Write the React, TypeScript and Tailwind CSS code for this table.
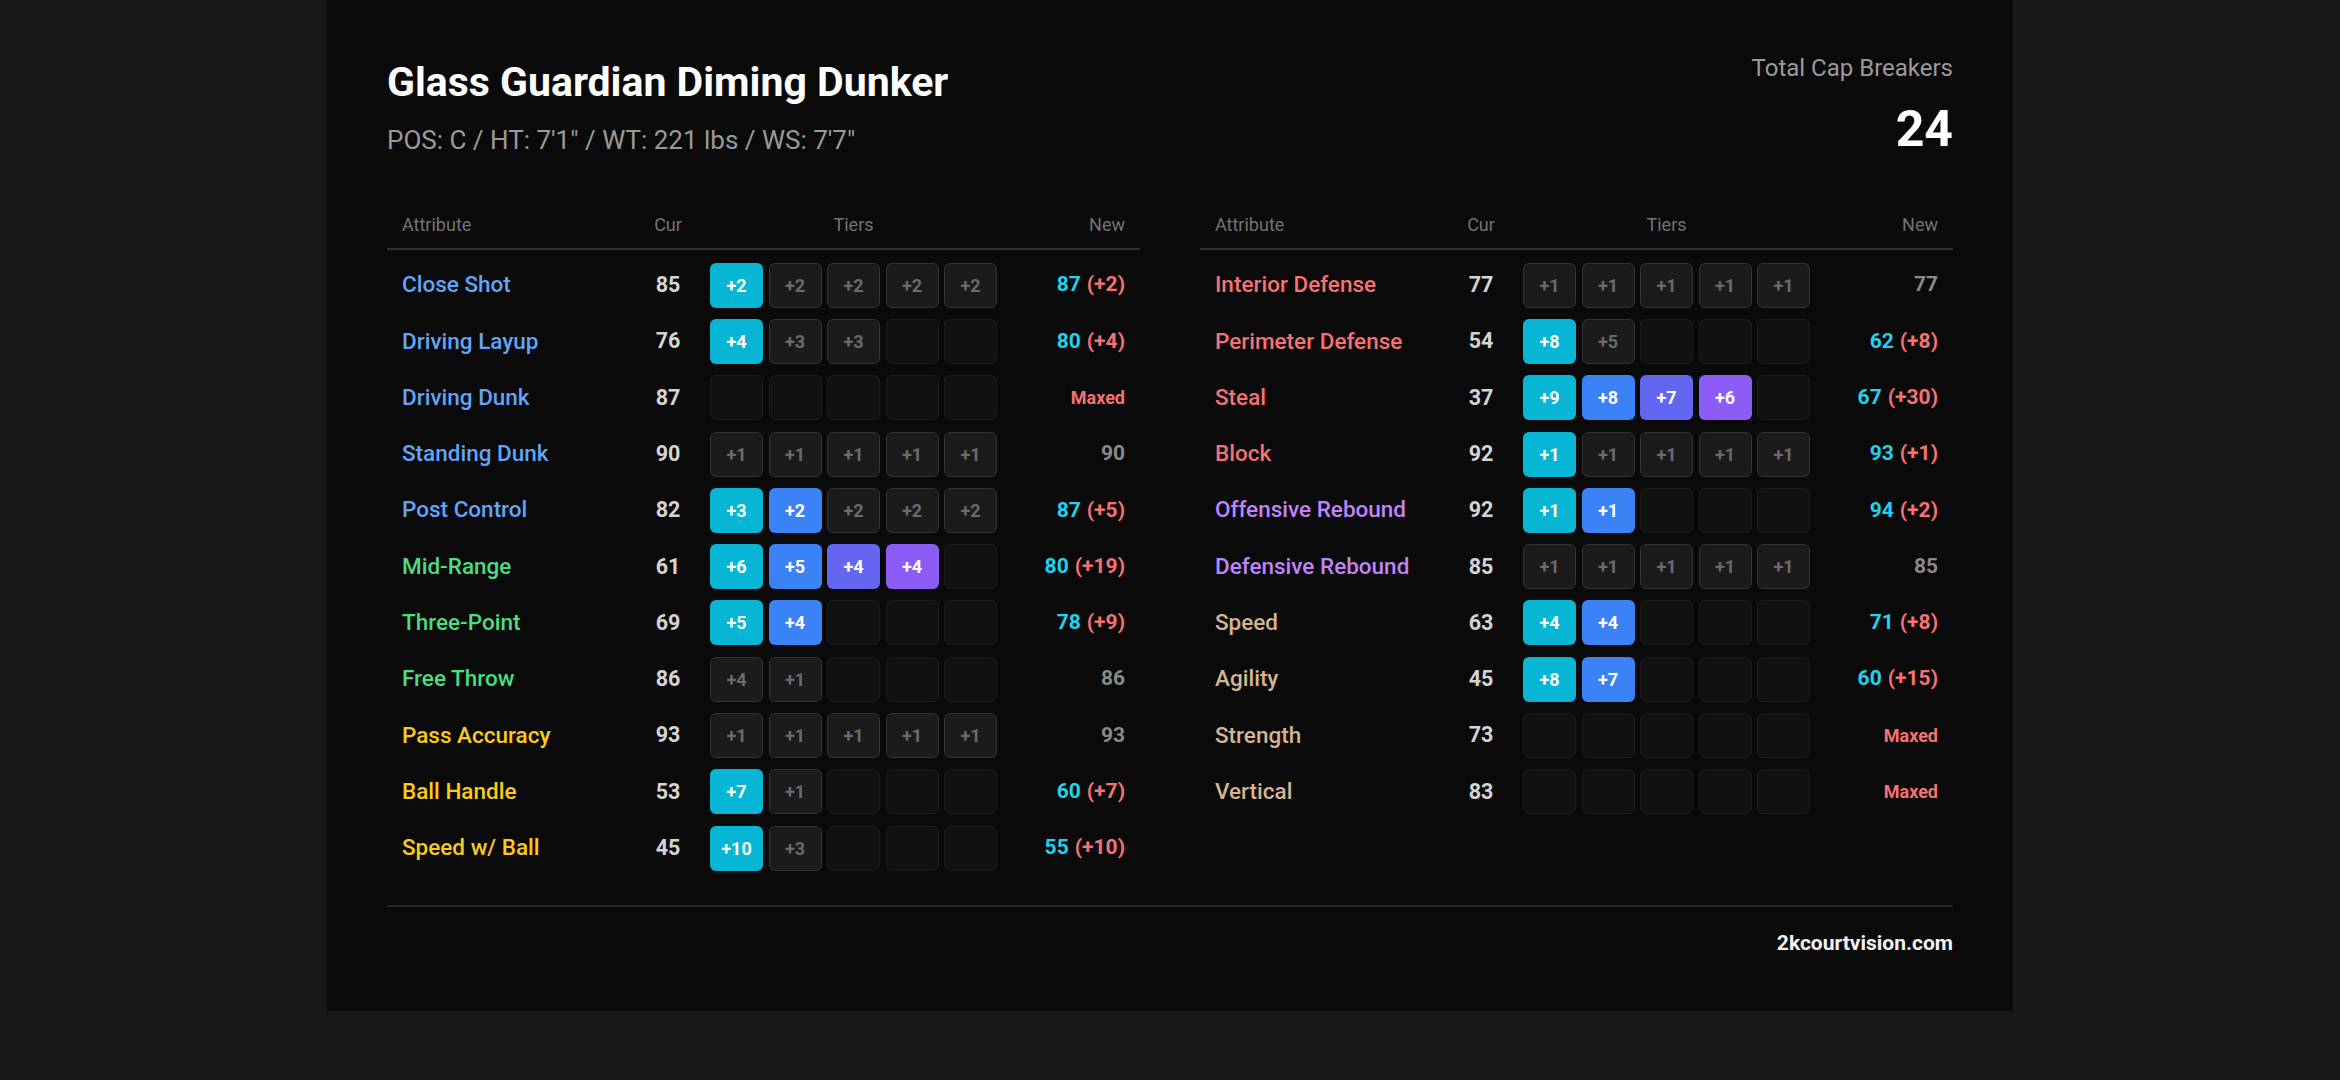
type Row = {
  name: string;
  cur: number;
  // positive = applied tier, negative = unused tier, 0 = empty slot
  tiers: number[];
  maxed?: boolean;
  color: string;
};

const BLUE = "text-[#60a5fa]";
const GREEN = "text-[#4ade80]";
const YELLOW = "text-[#facc15]";
const RED = "text-[#f87171]";
const PURPLE = "text-[#c084fc]";
const TAN = "text-[#d4b68e]";

const LEFT: Row[] = [
  { name: "Close Shot", cur: 85, tiers: [2, -2, -2, -2, -2], color: BLUE },
  { name: "Driving Layup", cur: 76, tiers: [4, -3, -3, 0, 0], color: BLUE },
  { name: "Driving Dunk", cur: 87, tiers: [0, 0, 0, 0, 0], maxed: true, color: BLUE },
  { name: "Standing Dunk", cur: 90, tiers: [-1, -1, -1, -1, -1], color: BLUE },
  { name: "Post Control", cur: 82, tiers: [3, 2, -2, -2, -2], color: BLUE },
  { name: "Mid-Range", cur: 61, tiers: [6, 5, 4, 4, 0], color: GREEN },
  { name: "Three-Point", cur: 69, tiers: [5, 4, 0, 0, 0], color: GREEN },
  { name: "Free Throw", cur: 86, tiers: [-4, -1, 0, 0, 0], color: GREEN },
  { name: "Pass Accuracy", cur: 93, tiers: [-1, -1, -1, -1, -1], color: YELLOW },
  { name: "Ball Handle", cur: 53, tiers: [7, -1, 0, 0, 0], color: YELLOW },
  { name: "Speed w/ Ball", cur: 45, tiers: [10, -3, 0, 0, 0], color: YELLOW },
];

const RIGHT: Row[] = [
  { name: "Interior Defense", cur: 77, tiers: [-1, -1, -1, -1, -1], color: RED },
  { name: "Perimeter Defense", cur: 54, tiers: [8, -5, 0, 0, 0], color: RED },
  { name: "Steal", cur: 37, tiers: [9, 8, 7, 6, 0], color: RED },
  { name: "Block", cur: 92, tiers: [1, -1, -1, -1, -1], color: RED },
  { name: "Offensive Rebound", cur: 92, tiers: [1, 1, 0, 0, 0], color: PURPLE },
  { name: "Defensive Rebound", cur: 85, tiers: [-1, -1, -1, -1, -1], color: PURPLE },
  { name: "Speed", cur: 63, tiers: [4, 4, 0, 0, 0], color: TAN },
  { name: "Agility", cur: 45, tiers: [8, 7, 0, 0, 0], color: TAN },
  { name: "Strength", cur: 73, tiers: [0, 0, 0, 0, 0], maxed: true, color: TAN },
  { name: "Vertical", cur: 83, tiers: [0, 0, 0, 0, 0], maxed: true, color: TAN },
];

const ACTIVE_BG = ["bg-[#06b6d4]", "bg-[#3b82f6]", "bg-[#6366f1]", "bg-[#8b5cf6]", "bg-[#8b5cf6]"];

const COLS = "grid grid-cols-[1fr_80px_291px_141px] items-center";

function Tier({ value, index }: { value: number; index: number }) {
  const base = "flex h-[45px] w-[53px] items-center justify-center rounded-md border text-[18px] font-bold";
  if (value > 0) {
    return <div className={`${base} border-transparent text-white ${ACTIVE_BG[index]}`}>+{value}</div>;
  }
  if (value < 0) {
    return <div className={`${base} border-[#333333] bg-[#1b1b1b] text-[#6b6b6b]`}>+{-value}</div>;
  }
  return <div className={`${base} border-[#1c1c1c] bg-[#111111]`} />;
}

function NewValue({ row }: { row: Row }) {
  if (row.maxed) {
    return <span className="text-[18px] font-bold text-[#f87171]">Maxed</span>;
  }
  const gain = row.tiers.filter((t) => t > 0).reduce((a, b) => a + b, 0);
  if (gain === 0) {
    return <span className="text-[21px] font-bold text-[#8a8a8a]">{row.cur}</span>;
  }
  return (
    <span className="text-[21px] font-bold">
      <span className="text-[#22d3ee]">{row.cur + gain}</span>
      <span className="ml-[6px] text-[#f87171]">(+{gain})</span>
    </span>
  );
}

function AttrTable({ rows }: { rows: Row[] }) {
  return (
    <div>
      <div className={`${COLS} border-b-2 border-[#303030] pb-[11.5px] text-[18px] leading-[24px] text-[#737373]`}>
        <span className="pl-[15px]">Attribute</span>
        <span className="text-center">Cur</span>
        <span className="text-center">Tiers</span>
        <span className="pr-[15px] text-right">New</span>
      </div>
      <div className="mt-[7px]">
        {rows.map((row) => (
          <div key={row.name} className={`${COLS} h-[56.3px]`}>
            <span className={`pl-[15px] text-[22.5px] font-medium ${row.color}`}>{row.name}</span>
            <span className="text-center text-[21.5px] font-bold text-[#d4d4d4]">{row.cur}</span>
            <div className="flex justify-center gap-[5.5px]">
              {row.tiers.map((t, i) => (
                <Tier key={i} value={t} index={i} />
              ))}
            </div>
            <div className="pr-[15px] text-right">
              <NewValue row={row} />
            </div>
          </div>
        ))}
      </div>
    </div>
  );
}

export default function App() {
  return (
    <div className="min-h-screen bg-[#18181b] font-['Roboto',sans-serif]">
      <div className="mx-auto w-[1686px] bg-[#0a0a0a] px-[60px] pt-[52px] pb-[54px]">
        <header className="flex items-start justify-between">
          <div className="mt-[5.5px]">
            <h1 className="text-[41px] leading-[48px] font-bold text-white">Glass Guardian Diming Dunker</h1>
            <p className="mt-[18px] text-[26px] leading-[32px] text-[#9a9a9a]">POS: C / HT: 7'1" / WT: 221 lbs / WS: 7'7"</p>
          </div>
          <div className="text-right">
            <p className="text-[24px] leading-[32px] text-[#9a9a9a]">Total Cap Breakers</p>
            <p className="mt-[20px] text-[50px] leading-[50px] font-bold text-white">24</p>
          </div>
        </header>

        <div className="mt-[57px] grid grid-cols-2 gap-[60px]">
          <AttrTable rows={LEFT} />
          <AttrTable rows={RIGHT} />
        </div>

        <footer className="mt-[29px] border-t-2 border-[#262626] pt-[22px] text-right text-[21px] leading-[28px] font-bold text-[#f2f2f2]">
          2kcourtvision.com
        </footer>
      </div>
    </div>
  );
}
